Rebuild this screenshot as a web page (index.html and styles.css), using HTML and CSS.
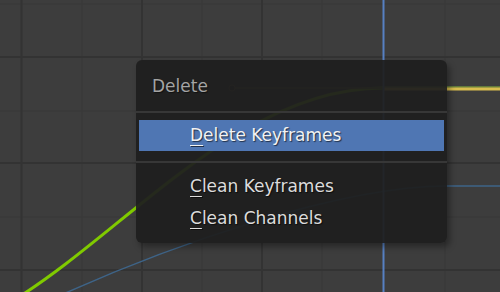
FILE: index.html
```html
<!doctype html>
<html>
<head>
<meta charset="utf-8">
<link rel="stylesheet" href="styles.css">
</head>
<body>
<div class="editor">
  <svg class="graph" width="500" height="292" viewBox="0 0 500 292">
    <g class="grid-minor">
      <line x1="82" y1="0" x2="82" y2="292"/>
      <line x1="202" y1="0" x2="202" y2="292"/>
      <line x1="322" y1="0" x2="322" y2="292"/>
      <line x1="445" y1="0" x2="445" y2="292"/>
      <line x1="0" y1="4" x2="500" y2="4"/>
      <line x1="0" y1="111" x2="500" y2="111"/>
      <line x1="0" y1="217" x2="500" y2="217"/>
    </g>
    <g class="grid-major">
      <line x1="21.5" y1="0" x2="21.5" y2="292"/>
      <line x1="142" y1="0" x2="142" y2="292"/>
      <line x1="262" y1="0" x2="262" y2="292"/>
      <line x1="0" y1="57" x2="500" y2="57"/>
      <line x1="0" y1="163" x2="500" y2="163"/>
      <line x1="0" y1="270" x2="500" y2="270"/>
    </g>
    <path class="curve-blue" d="M50 300 C170 245 340 186 447 186 L500 186"/>
    <path class="curve-green" d="M14 300 C125 232 240 88 383 88"/>
    <line class="handle" x1="232" y1="88" x2="383" y2="88"/>
    <circle class="handle-dot" cx="232" cy="88" r="3"/>
    <line class="curve-yellow-edge" x1="383" y1="87" x2="500" y2="87"/>
    <line class="curve-yellow" x1="383" y1="89" x2="500" y2="89"/>
    <line class="playhead" x1="383.5" y1="0" x2="383.5" y2="292"/>
  </svg>

  <div class="menu">
    <div class="menu-title">Delete</div>
    <div class="menu-sep"></div>
    <div class="menu-item active"><u>D</u>elete Keyframes</div>
    <div class="menu-sep lower"></div>
    <div class="menu-item"><u>C</u>lean Keyframes</div>
    <div class="menu-item"><u>C</u>lean Channels</div>
  </div>
</div>
</body>
</html>
```

FILE: styles.css
```css
html, body {
    margin: 0;
    padding: 0;
    background: #3d3d3d;
}

.editor {
    position: relative;
    width: 500px;
    height: 292px;
    overflow: hidden;
    font-family: "DejaVu Sans", sans-serif;
    font-size: 17px;
}

.graph {
    display: block;
}

.grid-minor line {
    stroke: #383838;
    stroke-width: 1;
}

.grid-major line {
    stroke: #333333;
    stroke-width: 2;
}

.curve-green {
    fill: none;
    stroke: #80ca00;
    stroke-width: 3;
}

.curve-blue {
    fill: none;
    stroke: #3e6488;
    stroke-width: 1.5;
}

.curve-yellow {
    stroke: #d9be4e;
    stroke-width: 3;
}

.curve-yellow-edge {
    stroke: #8bb83a;
    stroke-width: 1;
}

.handle {
    stroke: #6a5d33;
    stroke-width: 1.5;
}

.handle-dot {
    fill: #2a2a2a;
    stroke: #6a5d33;
    stroke-width: 1;
}

.playhead {
    stroke: #5680c2;
    stroke-width: 2;
}

/* popup menu */
.menu {
    position: absolute;
    left: 136px;
    top: 60px;
    width: 311px;
    height: 183px;
    box-sizing: border-box;
    padding: 3px 3px 9px;
    background: rgba(31, 31, 31, 0.94);
    border-radius: 6px;
    box-shadow: 3px 4px 6px rgba(0, 0, 0, 0.35);
}

.menu-title {
    height: 46px;
    line-height: 46px;
    padding-left: 13px;
    color: #a4a4a4;
    text-shadow: 1px 1px 1px rgba(0, 0, 0, 0.5);
}

.menu-sep {
    height: 2px;
    margin: 2px -3px 7px;
    background: #373737;
}

.menu-sep.lower {
    margin-top: 10px;
}

.menu-item {
    height: 32px;
    line-height: 32px;
    padding-left: 51px;
    color: #dcdcdc;
    text-shadow: 1px 1px 1px rgba(0, 0, 0, 0.6);
}

.menu-item.active {
    height: 31px;
    line-height: 31px;
    background: #4f76b3;
    color: #f2f2f2;
}

.menu-item u {
    text-decoration-thickness: 1px;
    text-underline-offset: 4px;
}
```
